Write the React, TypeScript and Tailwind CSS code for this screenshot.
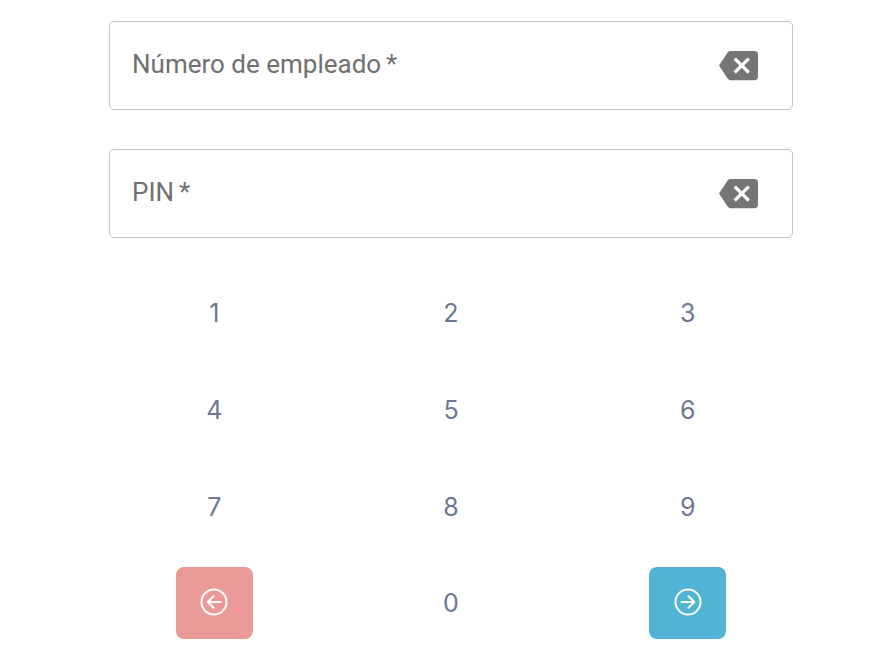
const digits = ['1', '2', '3', '4', '5', '6', '7', '8', '9'];

function BackspaceIcon() {
  return (
    <svg viewBox="0 0 24 24" className="w-[39px] h-[39px] fill-[#757575]">
      <path d="M22 3H7c-.69 0-1.23.35-1.59.88L0 12l5.41 8.11c.36.53.9.89 1.59.89h15c1.1 0 2-.9 2-2V5c0-1.1-.9-2-2-2zm-3 12.59L17.59 17 14 13.41 10.41 17 9 15.59 12.59 12 9 8.41 10.41 7 14 10.59 17.59 7 19 8.41 15.41 12 19 15.59z" />
    </svg>
  );
}

function CircleArrow({ dir }: { dir: 'left' | 'right' }) {
  return (
    <svg viewBox="0 0 24 24" fill="none" stroke="currentColor" strokeWidth={1.6} strokeLinecap="round" strokeLinejoin="round" className="w-[30px] h-[30px] mb-[2px]">
      <circle cx="12" cy="12" r="10" />
      {dir === 'left' ? <path d="M17.2 12H6.9M11.6 7.4 6.9 12l4.7 4.6" /> : <path d="M6.8 12h10.3M12.4 7.4l4.7 4.6-4.7 4.6" />}
    </svg>
  );
}

function Field({ label }: { label: string }) {
  return (
    <div className="h-[89px] border border-[#c4c4c4] rounded-[5px] flex items-center justify-between pl-[22px] pr-[34px] bg-white">
      <span className="font-['Roboto',sans-serif] text-[26px] text-[#707070] -translate-y-[1px]">
        {label}
        <span className="ml-[-1.5px]"> *</span>
      </span>
      <BackspaceIcon />
    </div>
  );
}

function Key({ value, last }: { value: string; last?: boolean }) {
  return (
    <div className={`${last ? 'h-[94px] pt-[2px]' : 'h-[97px]'} flex items-center justify-center font-['Inter',sans-serif] text-[25px] font-normal text-[#6d7791]`}>
      {value}
    </div>
  );
}

export default function App() {
  return (
    <div className="w-[890px] h-[668px] bg-white overflow-hidden pt-[21px]">
      <div className="mx-[109px] w-[684px] flex flex-col gap-[39px]">
        <Field label="Número de empleado" />
        <Field label="PIN" />
      </div>
      <div className="ml-[96px] w-[710px] mt-[27px] grid grid-cols-3">
        {digits.map(d => (
          <Key key={d} value={d} />
        ))}
        <div className="h-[94px] flex items-center justify-center">
          <button className="w-[77px] h-[72px] rounded-[8px] bg-[#ea9a97] flex items-center justify-center text-white">
            <CircleArrow dir="left" />
          </button>
        </div>
        <Key value="0" last />
        <div className="h-[94px] flex items-center justify-center">
          <button className="w-[77px] h-[72px] rounded-[8px] bg-[#52b4d4] flex items-center justify-center text-white">
            <CircleArrow dir="right" />
          </button>
        </div>
      </div>
    </div>
  );
}
